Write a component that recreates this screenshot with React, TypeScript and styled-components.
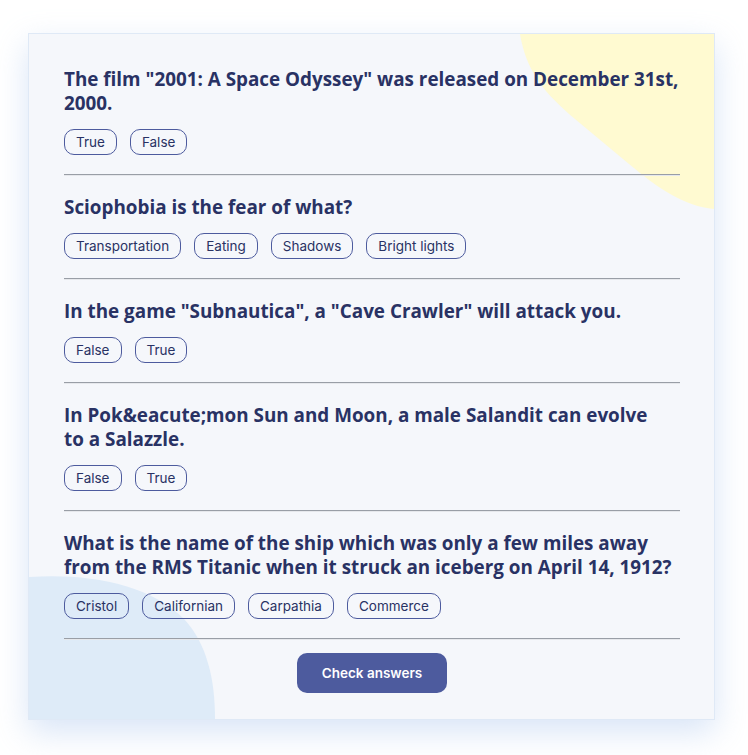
import React from "react";
import styled, { createGlobalStyle } from "styled-components";

const GlobalStyle = createGlobalStyle`
  html, body {
    margin: 0;
    padding: 0;
    background: #ffffff;
  }
  * { box-sizing: border-box; }
`;

const Page = styled.div`
  padding: 33px 33px 40px 28px;
  font-family: Inter, "Noto Sans", sans-serif;
`;

const Card = styled.main`
  position: relative;
  width: 687px;
  height: 687px;
  background: #f5f7fb;
  border: 1px solid #dfe9f6;
  box-shadow: 0 12px 30px rgba(170, 198, 238, 0.45);
  overflow: hidden;
  padding: 33px 34px 27px 35px;
`;

const Blob = styled.svg`
  position: absolute;
  left: 0;
  top: 0;
  width: 100%;
  height: 100%;
  pointer-events: none;
`;

const Content = styled.div`
  position: relative;
  z-index: 1;
  display: flex;
  flex-direction: column;
`;

const QuestionBlock = styled.section<{ $first?: boolean }>`
  padding-top: ${(p) => (p.$first ? "0" : "19px")};
  padding-bottom: 20px;
  border-bottom: 1px solid #e6e8ec;
  position: relative;
  &::after {
    content: "";
    position: absolute;
    left: 0;
    right: 0;
    bottom: 0;
    border-top: 1px solid #999ea6;
  }
`;

const QuestionText = styled.h2`
  margin: 0;
  font-family: "Open Sans", "Noto Sans", sans-serif;
  font-weight: 700;
  font-size: 18.85px;
  line-height: 24px;
  color: #293264;
`;

const Answers = styled.div`
  display: flex;
  gap: 13px;
  margin-top: 14px;
`;

const Pill = styled.button`
  font-family: Inter, "Noto Sans", sans-serif;
  font-size: 13.5px;
  line-height: 16px;
  color: #293264;
  background: transparent;
  border: 1px solid #4d5b9e;
  border-radius: 10px;
  padding: 4px 11px;
  height: 26px;
  cursor: pointer;
`;

const Footer = styled.div`
  display: flex;
  justify-content: center;
  padding-top: 13px;
`;

const CheckButton = styled.button`
  width: 150px;
  height: 40px;
  background: #4d5b9e;
  color: #ffffff;
  border: none;
  border-radius: 10px;
  font-family: Inter, "Noto Sans", sans-serif;
  font-weight: 600;
  font-size: 13.5px;
  cursor: pointer;
`;

const questions = [
  {
    q: 'The film "2001: A Space Odyssey" was released on December 31st, 2000.',
    a: ["True", "False"],
  },
  { q: "Sciophobia is the fear of what?", a: ["Transportation", "Eating", "Shadows", "Bright lights"] },
  { q: 'In the game "Subnautica", a "Cave Crawler" will attack you.', a: ["False", "True"] },
  { q: "In Pok&eacute;mon Sun and Moon, a male Salandit can evolve to\u00a0a Salazzle.", a: ["False", "True"] },
  {
    q: "What is the name of the ship which was only a few miles away from the RMS Titanic when it struck an iceberg on April 14, 1912?",
    a: ["Cristol", "Californian", "Carpathia", "Commerce"],
  },
];

export default function App() {
  return (
    <Page>
      <GlobalStyle />
      <Card>
        <Blob viewBox="0 0 685 685" preserveAspectRatio="none">
          <path d="M491 0 C497 35 512 55 540 80 L600 130 C630 155 655 172 685 175 L685 0 Z" fill="#fffad1" />
          <path d="M0 543 C60 539 120 550 155 585 C178 610 186 645 186 685 L0 685 Z" fill="#deebf8" />
        </Blob>
        <Content>
          {questions.map((item, i) => (
            <QuestionBlock key={i} $first={i === 0}>
              <QuestionText>{item.q}</QuestionText>
              <Answers>
                {item.a.map((ans) => (
                  <Pill key={ans}>{ans}</Pill>
                ))}
              </Answers>
            </QuestionBlock>
          ))}
          <Footer>
            <CheckButton>Check answers</CheckButton>
          </Footer>
        </Content>
      </Card>
    </Page>
  );
}
